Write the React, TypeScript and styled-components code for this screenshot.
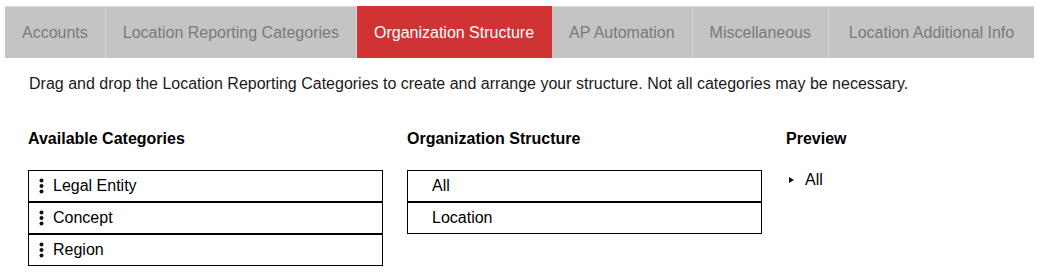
import React from "react";
import styled, { createGlobalStyle } from "styled-components";

const GlobalStyle = createGlobalStyle`
  body {
    margin: 0;
    background: #ffffff;
    font-family: "Liberation Sans", Arial, sans-serif;
  }
`;

const Page = styled.div`
  width: 1041px;
  height: 280px;
  box-sizing: border-box;
  padding-top: 6px;
`;

const TabBar = styled.div`
  display: flex;
  flex-direction: row;
  margin-left: 5px;
  width: 1029px;
  height: 52px;
  background: #c4c4c4;
`;

const Tab = styled.div<{ active?: boolean }>`
  display: flex;
  align-items: center;
  justify-content: center;
  box-sizing: border-box;
  height: 52px;
  padding: 0 17px;
  font-size: 16px;
  color: ${(p) => (p.active ? "#ffffff" : "#7a7a7a")};
  background: ${(p) => (p.active ? "#cf3333" : "#c4c4c4")};
  border-top: 1px solid ${(p) => (p.active ? "#cf3333" : "#dadada")};
  border-right: 1px solid ${(p) => (p.active ? "#cf3333" : "#d6d6d6")};
  white-space: nowrap;

  &:last-child {
    flex: 1;
    border-right: none;
  }
`;

const Content = styled.div`
  padding: 0 0 0 28px;
`;

const Intro = styled.p`
  margin: 0;
  padding: 16px 0 0 1px;
  font-size: 16px;
  line-height: 19px;
  color: #1a1a1a;
`;

const Columns = styled.div`
  display: grid;
  grid-template-columns: 355px 355px 1fr;
  column-gap: 24px;
  margin-top: 36px;
`;

const Column = styled.div`
  display: flex;
  flex-direction: column;
`;

const Heading = styled.h3`
  margin: 0 0 22px 0;
  font-size: 16px;
  line-height: 19px;
  font-weight: 700;
  color: #000000;
`;

const List = styled.div`
  display: flex;
  flex-direction: column;
`;

const Item = styled.div<{ indent?: number }>`
  display: flex;
  align-items: center;
  gap: 9px;
  box-sizing: border-box;
  height: 32px;
  padding-left: ${(p) => p.indent ?? 10}px;
  border: 1px solid #000000;
  font-size: 16px;
  color: #000000;
`;

const Grip = () => (
  <svg width="5" height="16" viewBox="0 0 5 16">
    <circle cx="2.5" cy="2.5" r="2" fill="#111" />
    <circle cx="2.5" cy="8" r="2" fill="#111" />
    <circle cx="2.5" cy="13.5" r="2" fill="#111" />
  </svg>
);

const TreeRow = styled.div`
  display: flex;
  align-items: center;
  gap: 11px;
  padding: 0 0 0 3px;
  font-size: 16px;
  line-height: 19px;
  color: #000000;
`;

const Caret = () => (
  <svg width="5" height="6" viewBox="0 0 5 6">
    <polygon points="0,0 5,3 0,6" fill="#111" />
  </svg>
);

const tabs = [
  "Accounts",
  "Location Reporting Categories",
  "Organization Structure",
  "AP Automation",
  "Miscellaneous",
  "Location Additional Info",
];

const available = ["Legal Entity", "Concept", "Region"];
const structure = ["All", "Location"];

const App = () => {
  return (
    <Page>
      <GlobalStyle />
      <TabBar>
        {tabs.map((t) => (
          <Tab key={t} active={t === "Organization Structure"}>
            {t}
          </Tab>
        ))}
      </TabBar>
      <Content>
        <Intro>
          Drag and drop the Location Reporting Categories to create and arrange
          your structure. Not all categories may be necessary.
        </Intro>
        <Columns>
          <Column>
            <Heading>Available Categories</Heading>
            <List>
              {available.map((a) => (
                <Item key={a}>
                  <Grip />
                  {a}
                </Item>
              ))}
            </List>
          </Column>
          <Column>
            <Heading>Organization Structure</Heading>
            <List>
              {structure.map((s) => (
                <Item key={s} indent={24}>
                  {s}
                </Item>
              ))}
            </List>
          </Column>
          <Column>
            <Heading>Preview</Heading>
            <TreeRow>
              <Caret />
              All
            </TreeRow>
          </Column>
        </Columns>
      </Content>
    </Page>
  );
};

export default App;
